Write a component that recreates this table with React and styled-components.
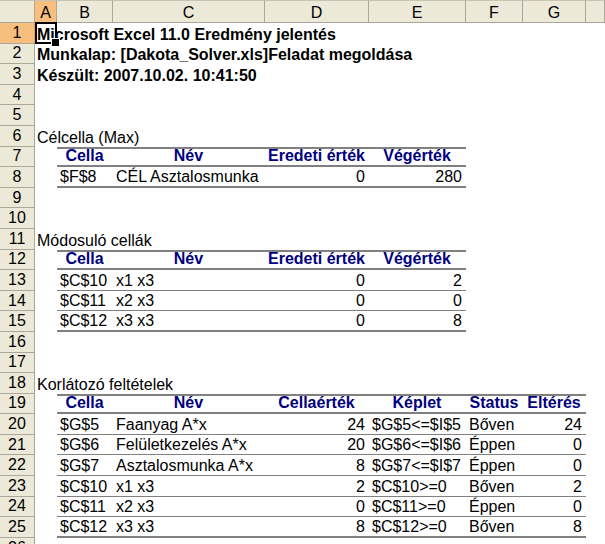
import React from "react";
import styled, { createGlobalStyle, css } from "styled-components";

const GlobalStyle = createGlobalStyle`
	* {
		box-sizing: border-box;
	}
	body {
		margin: 0;
		background: #ffffff;
		overflow: hidden;
	}
`;

const COLS = ["A", "B", "C", "D", "E", "F", "G", ""];

const Sheet = styled.div`
	display: grid;
	grid-template-columns: 35px 22px 56px 152px 104px 97px 57px 63px 1fr;
	grid-template-rows: 23px;
	grid-auto-rows: 20.6px;
	width: 605px;
	height: 544px;
	overflow: hidden;
	background: #ffffff;
	font-family: "Liberation Sans", Arial, sans-serif;
	font-size: 16px;
	color: #000000;
`;

const Corner = styled.div`
	background: #ece9d8;
	border-right: 1px solid #aca899;
	border-bottom: 1px solid #aca899;
	border-top: 1px solid #c8c5b4;
`;

const ColHead = styled.div`
	display: flex;
	align-items: center;
	justify-content: center;
	padding-top: 2px;
	background: ${(p) => (p.$active ? "#f8be7e" : "#ece9d8")};
	border-right: 1px solid #aca899;
	border-bottom: 1px solid ${(p) => (p.$active ? "#e0a060" : "#aca899")};
	border-top: 1px solid #c8c5b4;
	color: #000000;
`;

const RowHead = styled.div`
	display: flex;
	align-items: center;
	justify-content: center;
	background: ${(p) => (p.$active ? "#f8be7e" : "#ece9d8")};
	border-right: 1px solid ${(p) => (p.$active ? "#e0a060" : "#aca899")};
	border-bottom: 1px solid #aca899;
	color: #000000;
`;

const Title = styled.div`
	grid-column: 2 / -1;
	position: relative;
	display: flex;
	align-items: flex-end;
	padding: 0 0 1px 2px;
	line-height: 16px;
	white-space: nowrap;
	font-weight: ${(p) => (p.$bold ? 700 : 400)};
`;

const Blank = styled.div``;

const Cell = styled.div`
	display: flex;
	align-items: flex-end;
	justify-content: ${(p) =>
		p.$align === "right" ? "flex-end" : p.$align === "center" ? "center" : "flex-start"};
	padding: 0 4px 1px 3px;
	line-height: 16px;
	white-space: nowrap;
	${(p) =>
		p.$head &&
		css`
			font-weight: 700;
			color: #000080;
			border-top: 2px solid #808080;
			border-bottom: 2px solid #808080;
		`}
	${(p) =>
		p.$last &&
		css`
			border-bottom: 2px solid #808080;
		`}
	${(p) =>
		!p.$head &&
		!p.$last &&
		css`
			border-bottom: 1px solid #808080;
		`}
`;

/* active cell frame over A1, with the fill handle */
const Selection = styled.div`
	position: absolute;
	left: 0;
	top: -1px;
	width: 22px;
	height: calc(100% + 1px);
	border: 2px solid #000000;
	pointer-events: none;

	&::after {
		content: "";
		position: absolute;
		right: -5px;
		bottom: -5px;
		width: 7px;
		height: 7px;
		background: #000000;
		border: 1px solid #ffffff;
	}
`;

const HEAD_4 = ["Cella", "Név", "Eredeti érték", "Végérték"];
const HEAD_6 = ["Cella", "Név", "Cellaérték", "Képlet", "Status", "Eltérés"];
const ALIGN_4 = ["left", "left", "right", "right"];
const ALIGN_6 = ["left", "left", "right", "left", "left", "right"];

const rows = {
	1: { title: "Microsoft Excel 11.0 Eredmény jelentés", bold: true, selected: true },
	2: { title: "Munkalap: [Dakota_Solver.xls]Feladat megoldása", bold: true },
	3: { title: "Készült: 2007.10.02. 10:41:50", bold: true },
	6: { title: "Célcella (Max)" },
	7: { head: HEAD_4 },
	8: { cells: ["$F$8", "CÉL Asztalosmunka", "0", "280"], align: ALIGN_4, last: true },
	11: { title: "Módosuló cellák" },
	12: { head: HEAD_4 },
	13: { cells: ["$C$10", "x1 x3", "0", "2"], align: ALIGN_4 },
	14: { cells: ["$C$11", "x2 x3", "0", "0"], align: ALIGN_4 },
	15: { cells: ["$C$12", "x3 x3", "0", "8"], align: ALIGN_4, last: true },
	18: { title: "Korlátozó feltételek" },
	19: { head: HEAD_6 },
	20: { cells: ["$G$5", "Faanyag A*x", "24", "$G$5<=$I$5", "Bőven", "24"], align: ALIGN_6 },
	21: { cells: ["$G$6", "Felületkezelés A*x", "20", "$G$6<=$I$6", "Éppen", "0"], align: ALIGN_6 },
	22: { cells: ["$G$7", "Asztalosmunka A*x", "8", "$G$7<=$I$7", "Éppen", "0"], align: ALIGN_6 },
	23: { cells: ["$C$10", "x1 x3", "2", "$C$10>=0", "Bőven", "2"], align: ALIGN_6 },
	24: { cells: ["$C$11", "x2 x3", "0", "$C$11>=0", "Éppen", "0"], align: ALIGN_6 },
	25: { cells: ["$C$12", "x3 x3", "8", "$C$12>=0", "Bőven", "8"], align: ALIGN_6, last: true },
};

const renderRow = (n) => {
	const row = rows[n];
	const out = [
		<RowHead key={`h${n}`} $active={n === 1}>
			{n}
		</RowHead>,
	];
	if (row && row.title) {
		out.push(
			<Title key={`t${n}`} $bold={row.bold}>
				{row.title}
				{row.selected && <Selection />}
			</Title>
		);
		return out;
	}
	const list = row ? row.head || row.cells : [];
	out.push(<Blank key={`a${n}`} />);
	for (let i = 0; i < 7; i++) {
		if (i < list.length) {
			out.push(
				<Cell
					key={`c${n}-${i}`}
					$head={!!row.head}
					$last={row.last}
					$align={row.head ? "center" : row.align[i]}>
					{list[i]}
				</Cell>
			);
		} else {
			out.push(<Blank key={`c${n}-${i}`} />);
		}
	}
	return out;
};

const App = () => {
	const rowNumbers = Array.from({ length: 26 }, (_, i) => i + 1);
	return (
		<>
			<GlobalStyle />
			<Sheet>
				<Corner />
				{COLS.map((c, i) => (
					<ColHead key={`col${i}`} $active={c === "A"}>
						{c}
					</ColHead>
				))}
				{rowNumbers.map((n) => renderRow(n))}
			</Sheet>
		</>
	);
};

export default App;
